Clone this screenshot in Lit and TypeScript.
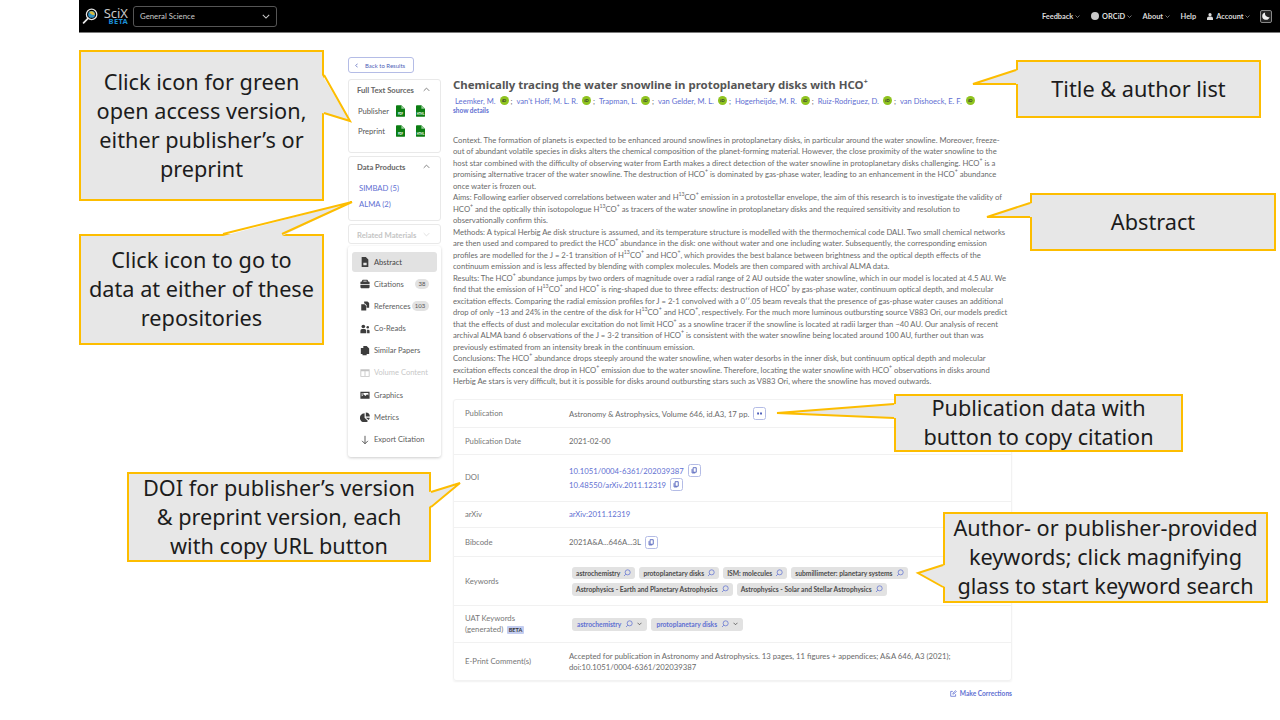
import { LitElement, html, css, svg } from "lit";
import { customElement } from "lit/decorators.js";

const sup = (t: string) => html`<sup>${t}</sup>`;
const P = sup("+");
const H13 = html`H${sup("13")}CO${P}`;
const HCO = html`HCO${P}`;

const abstract = [
  html`Context. The formation of planets is expected to be enhanced around snowlines in protoplanetary disks, in particular around the water snowline. Moreover, freeze-`,
  html`out of abundant volatile species in disks alters the chemical composition of the planet-forming material. However, the close proximity of the water snowline to the`,
  html`host star combined with the difficulty of observing water from Earth makes a direct detection of the water snowline in protoplanetary disks challenging. ${HCO} is a`,
  html`promising alternative tracer of the water snowline. The destruction of ${HCO} is dominated by gas-phase water, leading to an enhancement in the ${HCO} abundance`,
  html`once water is frozen out.`,
  html`Aims: Following earlier observed correlations between water and ${H13} emission in a protostellar envelope, the aim of this research is to investigate the validity of`,
  html`${HCO} and the optically thin isotopologue ${H13} as tracers of the water snowline in protoplanetary disks and the required sensitivity and resolution to`,
  html`observationally confirm this.`,
  html`Methods: A typical Herbig Ae disk structure is assumed, and its temperature structure is modelled with the thermochemical code DALI. Two small chemical networks`,
  html`are then used and compared to predict the ${HCO} abundance in the disk: one without water and one including water. Subsequently, the corresponding emission`,
  html`profiles are modelled for the J = 2-1 transition of ${H13} and ${HCO}, which provides the best balance between brightness and the optical depth effects of the`,
  html`continuum emission and is less affected by blending with complex molecules. Models are then compared with archival ALMA data.`,
  html`Results: The ${HCO} abundance jumps by two orders of magnitude over a radial range of 2 AU outside the water snowline, which in our model is located at 4.5 AU. We`,
  html`find that the emission of ${H13} and ${HCO} is ring-shaped due to three effects: destruction of ${HCO} by gas-phase water, continuum optical depth, and molecular`,
  html`excitation effects. Comparing the radial emission profiles for J = 2-1 convolved with a 0′′.05 beam reveals that the presence of gas-phase water causes an additional`,
  html`drop of only ~13 and 24% in the centre of the disk for ${H13} and ${HCO}, respectively. For the much more luminous outbursting source V883 Ori, our models predict`,
  html`that the effects of dust and molecular excitation do not limit ${HCO} as a snowline tracer if the snowline is located at radii larger than ~40 AU. Our analysis of recent`,
  html`archival ALMA band 6 observations of the J = 3-2 transition of ${HCO} is consistent with the water snowline being located around 100 AU, further out than was`,
  html`previously estimated from an intensity break in the continuum emission.`,
  html`Conclusions: The ${HCO} abundance drops steeply around the water snowline, when water desorbs in the inner disk, but continuum optical depth and molecular`,
  html`excitation effects conceal the drop in ${HCO} emission due to the water snowline. Therefore, locating the water snowline with ${HCO} observations in disks around`,
  html`Herbig Ae stars is very difficult, but it is possible for disks around outbursting stars such as V883 Ori, where the snowline has moved outwards.`,
];

const authors = ["Leemker, M.", "van't Hoff, M. L. R.", "Trapman, L.", "van Gelder, M. L.", "Hogerheijde, M. R.", "Ruiz-Rodriguez, D.", "van Dishoeck, E. F."];

const chevron = (up = false) => html`<svg class="chev" viewBox="0 0 10 6"><path d=${up ? "M1 5l4-4 4 4" : "M1 1l4 4 4-4"} fill="none" stroke="currentColor" stroke-width="1.3"/></svg>`;
const search = html`<svg class="mag" viewBox="0 0 12 12"><circle cx="7" cy="5" r="3.8" fill="none" stroke="#5f70d2" stroke-width="1.1"/><path d="M4.2 7.8L1.5 10.5" stroke="#5f70d2" stroke-width="1.1"/></svg>`;
const copy = html`<button class="mini"><svg viewBox="0 0 10 10"><path d="M3 1h4.5v6.5H3z" fill="none" stroke="#4a5bb8" stroke-width="1.2"/><path d="M1.5 3v5.5H6" fill="none" stroke="#4a5bb8" stroke-width="1.2"/></svg></button>`;
const quote = html`<button class="mini"><svg viewBox="0 0 10 10"><path d="M1.500 3.500h2.800v3H1.800zM5.700 3.500h2.800v3H6z" fill="#4a5bb8"/></svg></button>`;
const orcid = html`<span class="orcid">iD</span>`;
const doc = (label: string) => html`<svg class="doc" viewBox="0 0 10 13"><path d="M0 1a1 1 0 0 1 1-1h5l4 4v8a1 1 0 0 1-1 1H1a1 1 0 0 1-1-1z" fill="#0b7d12"/><path d="M6 0v4h4z" fill="#9ccf9e"/><text x="5" y="10.5" text-anchor="middle" font-size="3" font-weight="700" fill="#fff" font-family="Lato, sans-serif">${label}</text></svg>`;

const I = (d: unknown, fill = "#3d3d3d") => html`<svg class="nicon" viewBox="0 0 12 12" fill=${fill}>${d}</svg>`;
const navItems: { label: string; icon: unknown; badge?: string; off?: boolean; active?: boolean }[] = [
  { label: "Abstract", active: true, icon: I(svg`<path fill-rule="evenodd" d="M2 0h5l3 3v9H2zM4 7v3h4V7z"/>`) },
  { label: "Citations", badge: "38", icon: I(svg`<path d="M3.5 1h5a1 1 0 0 1 1 1v1h1a1 1 0 0 1 1 1v2H.5V4a1 1 0 0 1 1-1h1V2a1 1 0 0 1 1-1zM4 2.2V3h4v-.8zM.5 7h11v3a1 1 0 0 1-1 1h-9a1 1 0 0 1-1-1z"/>`) },
  { label: "References", badge: "103", icon: I(svg`<path d="M5 .5h4l2 2V8H8V5L6 3H5zM1.5 4h4L7.500 6v5.500h-6z"/>`) },
  { label: "Co-Reads", icon: I(svg`<circle cx="4" cy="3" r="2.200"/><path d="M.5 11V8a2 2 0 0 1 2-2h3a2 2 0 0 1 2 2v3z"/><circle cx="9.300" cy="4" r="1.500"/><path d="M8.500 7h1.500a1.500 1.500 0 0 1 1.500 1.500V11h-3z"/>`) },
  { label: "Similar Papers", icon: I(svg`<path d="M4 0h4l3 3v6.500H8V11H3V9.500H1V2.500h3z"/>`) },
  { label: "Volume Content", off: true, icon: I(svg`<path fill-rule="evenodd" d="M.5 1.500h11v9H.5zM1.500 4v5.500h4V4zM6.500 4v5.500h4V4z"/>`, "#c4c4c4") },
  { label: "Graphics", icon: I(svg`<path fill-rule="evenodd" d="M.5 2h11v8.500H.5zM2 3.500v4.200l2.500-2.200 2 1.800 2-2.300 1.500 1.700V3.500zM3.500 3.800a1 1 0 1 1 0 2 1 1 0 0 1 0-2z"/>`) },
  { label: "Metrics", icon: I(svg`<path d="M5.500 1.500v5.500l4 3.700A5.500 5.500 0 1 1 5.500 1.500z"/><path d="M7 .5a5 5 0 0 1 4.800 4.800H7z"/><path d="M7 7h4.700a5 5 0 0 1-1.400 2.700z"/>`) },
  { label: "Export Citation", icon: I(svg`<path d="M6 1v9.500M2.500 7L6 10.500 9.500 7" fill="none" stroke="#3d3d3d" stroke-width="1"/>`) },
];

const keywords = ["astrochemistry", "protoplanetary disks", "ISM: molecules", "submillimeter: planetary systems", "Astrophysics - Earth and Planetary Astrophysics", "Astrophysics - Solar and Stellar Astrophysics"];

/* Annotation callouts: free-placed over the page. tail = polygon in page coordinates, inset = direction into the box */
const callouts = [
  { x: 79, y: 50, w: 245, h: 151, tail: [[324, 75], [350, 121], [324, 113]], inset: [-2, 0], lines: ["Click icon for green", "open access version,", "either publisher’s or", "preprint"] },
  { x: 79, y: 234, w: 245, h: 111, tail: [[223, 234], [352, 202], [282, 234]], inset: [0, 2], lines: ["Click icon to go to", "data at either of these", "repositories"] },
  { x: 1016, y: 60, w: 245, h: 58, tail: [[1016, 70], [973, 84], [1016, 84]], inset: [2, 0], lines: ["Title & author list"] },
  { x: 1030, y: 193, w: 246, h: 58, tail: [[1030, 203], [987, 217], [1030, 217]], inset: [2, 0], lines: ["Abstract"] },
  { x: 894, y: 394, w: 289, h: 58, tail: [[894, 404], [777, 413], [894, 418]], inset: [2, 0], lines: ["Publication data with", "button to copy citation"] },
  { x: 127, y: 472, w: 304, h: 90, tail: [[431, 492], [460, 483], [431, 507]], inset: [-2, 0], lines: ["DOI for publisher’s version", "& preprint version, each", "with copy URL button"] },
  { x: 943, y: 512, w: 325, h: 91, tail: [[943, 565], [918, 573], [943, 587]], inset: [2, 0], lines: ["Author- or publisher-provided", "keywords; click magnifying", "glass to start keyword search"] },
];

@customElement("app-root")
export class AppRoot extends LitElement {
  static styles = css`
    :host { display: block; position: relative; width: 1280px; height: 720px; overflow: hidden; background: #fff; font-family: Lato, "Noto Sans", sans-serif; font-size: 8px; color: #666; }
    * { box-sizing: border-box; }
    header { margin-left: 79px; height: 33px; background: #000; border-bottom: 1px solid #7a7a7a; display: flex; align-items: center; padding: 0 8px 0 3px; color: #ddd; font-size: 7.400px; font-weight: 700; }
    .logo { display: flex; align-items: center; gap: 5px; margin-right: 5px; }
    .logo svg { width: 16px; height: 16px; flex: none; }
    .brand { display: flex; flex-direction: column; align-items: flex-end; width: 25px; }
    .brand b { font-weight: 400; font-size: 13px; color: #c8c8c8; line-height: 10px; font-family: "Noto Sans", sans-serif; }
    .brand i { font-style: normal; font-weight: 700; font-size: 7.500px; color: #1c8fd6; line-height: 7px; letter-spacing: .3px; font-family: "Noto Sans", sans-serif; }
    .select { width: 144px; height: 21px; border: 1px solid #555; border-radius: 3px; display: flex; align-items: center; justify-content: space-between; padding: 0 6px; font-weight: 400; color: #ccc; font-size: 7.800px; }
    .chev { width: 7px; height: 5px; flex: none; }
    .select .chev { width: 8px; }
    .menu { margin-left: auto; display: flex; align-items: center; gap: 11px; }
    .menu span { display: flex; align-items: center; gap: 1.500px; }
    .menu .chev { width: 5px; height: 3px; color: #aaa; }
    .moon { width: 12px; height: 13px; border: 1px solid #888; border-radius: 2px; background: #222; display: flex; align-items: center; justify-content: center; margin-left: -1px; }
    .moon svg { width: 8px; height: 8px; }

    main { display: flex; padding: 24px 0 0 348px; }
    aside { width: 93px; flex: none; display: flex; flex-direction: column; align-items: stretch; }
    .back { width: 66px; height: 16px; border: 1px solid #b4bce6; border-radius: 3px; background: #fff; display: flex; align-items: center; gap: 7px; padding: 0 6px; font-size: 6px; color: #4f5fb8; font-family: inherit; margin-bottom: 6px; white-space: nowrap; }
    .back svg { width: 3px; height: 5px; flex: none; }
    .card { border: 1px solid #e9e9e9; border-radius: 3px; background: #fff; padding: 4px 8px; }
    .card + .card { margin-top: 3px; }
    .card h4 { margin: 0; height: 11px; font-size: 7.650px; font-weight: 700; color: #666; display: flex; justify-content: space-between; align-items: center; white-space: nowrap; }
    .card h4 .chev { color: #777; margin-right: 2px; }
    .sources { height: 74px; }
    .src { display: flex; align-items: center; margin-left: 1px; height: 20px; font-size: 7.600px; color: #555; }
    .src:first-of-type { margin-top: 6px; }
    .src label { width: 38px; flex: none; }
    .doc { width: 9px; height: 12px; margin-right: 11px; flex: none; }
    .data { height: 65px; }
    .data a { display: block; color: #5f70d2; font-size: 7.700px; line-height: 15.500px; margin-left: 2px; }
    .data a:first-of-type { margin-top: 9px; }
    .related { height: 20px; padding: 4px 8px; }
    .related h4 { color: #c4c4c4; }
    .related h4 .chev { color: #ddd; }
    nav { margin-top: 2px; height: 211px; border-radius: 3px; background: #fff; box-shadow: 0 1px 3px rgba(0,0,0,.2); padding: 6px 4px 0; }
    .item { height: 20px; margin-bottom: 2.200px; border-radius: 3px; display: flex; align-items: center; padding: 0 8px; gap: 4px; font-size: 7.550px; color: #5c5c5c; white-space: nowrap; }
    .item.active { background: #e2e2e2; color: #444; }
    .item.off { color: #c8c8c8; }
    .nicon { width: 10px; height: 10px; flex: none; }
    .badge { margin-left: auto; min-width: 14px; height: 10px; border-radius: 5px; background: #e2e2e2; font-size: 6px; line-height: 10px; text-align: center; padding: 0 3px; color: #555; }
    .item .badge.wide { margin-left: -3px; padding: 0 2px; min-width: 17px; }

    article { margin-left: 12px; padding-top: 18px; width: 559px; flex: none; }
    h1 { margin: 0; padding-top: 1px; height: 20px; line-height: 18px; font-size: 11.450px; font-weight: 700; color: #555; white-space: nowrap; font-family: "Noto Sans", sans-serif; }
    h1 sup { font-size: 7px; line-height: 0; }
    .authors { display: flex; align-items: center; height: 11px; padding-left: 2px; color: #5f70d2; font-size: 7.600px; white-space: nowrap; }
    .authors .semi { color: #666; margin: 0 4px 0 2px; }
    .orcid { width: 9px; height: 9px; border-radius: 50%; background: #8fc31f; color: #333; font-size: 4.500px; font-weight: 700; line-height: 9px; text-align: center; margin-left: 4px; flex: none; }
    .show { font-size: 6.500px; font-weight: 700; color: #5f70d2; line-height: 10px; margin-bottom: 19px; }
    .abs { line-height: 11.480px; font-size: 7.700px; color: #6a6a6a; white-space: nowrap; margin-bottom: 11.500px; }
    .abs sup { font-size: 5.200px; line-height: 0; }

    .table { border: 1px solid #f2f2f2; border-radius: 3px; box-shadow: 0 1px 2px rgba(0,0,0,.06); }
    .row { display: grid; grid-template-columns: 104px 1fr; align-items: center; border-bottom: 1.500px solid #f1f1f1; padding-left: 11px; font-size: 7.730px; color: #6a6a6a; }
    .row:last-child { border-bottom: 0; }
    .row .k { color: #777; line-height: 11px; }
    .lnk { color: #5f70d2; }
    .line { display: flex; align-items: center; gap: 4px; white-space: nowrap; }
    .mini { width: 13px; height: 13px; border: 1px solid #b4bce6; border-radius: 2.500px; background: #fff; padding: 0; display: flex; align-items: center; justify-content: center; flex: none; }
    .mini svg { width: 7px; height: 7px; }
    .tags { display: flex; flex-wrap: wrap; gap: 4px; margin-left: 3px; }
    .tag { height: 12.500px; border-radius: 3px; background: #e2e2e2; display: flex; align-items: center; gap: 3px; padding: 0 4px; font-size: 6.700px; font-weight: 700; color: #4c4c4c; white-space: nowrap; }
    .tag.uat { color: #5f70d2; height: 13px; gap: 4px; padding: 0 5px; }
    .tag .chev { width: 5px; height: 3.500px; color: #333; }
    .mag { width: 8px; height: 8px; flex: none; }
    .beta { background: #c3cdf0; color: #333; font-size: 5.500px; font-weight: 700; padding: 0 1.500px; border-radius: 1px; margin-left: 2px; line-height: 8px; display: inline-block; }
    .comment { line-height: 10.500px; }
    .fix { display: flex; justify-content: flex-end; align-items: center; gap: 3px; margin-top: 8px; font-size: 6.600px; font-weight: 700; color: #5f70d2; }
    .fix svg { width: 7px; height: 7px; }

    .tails { position: absolute; left: 0; top: 0; width: 1280px; height: 720px; pointer-events: none; }
    .callout { position: absolute; padding-bottom: 2px; background: #e7e7e7; border: 2px solid #fdbd00; display: flex; flex-direction: column; justify-content: center; align-items: center; font-family: "Noto Sans", sans-serif; font-size: 21.700px; line-height: 29px; color: #1c1c1c; text-align: center; white-space: nowrap; }
  `;

  row(k: unknown, v: unknown, h: number) {
    return html`<div class="row" style="height:${h}px"><div class="k">${k}</div><div>${v}</div></div>`;
  }

  render() {
    return html`
      <header>
        <div class="logo">
          <svg viewBox="0 0 20 20">
            <circle cx="12" cy="8" r="6.500" fill="none" stroke="#e8e8e8" stroke-width="1.600"/>
            <circle cx="12" cy="8" r="4.300" fill="#2f8fc4"/>
            <path d="M9 5a4.300 4.300 0 0 1 7 3c-2 2-5 0-7-3z" fill="#d8b93a"/>
            <path d="M7.500 13L2 18.500" stroke="#e8e8e8" stroke-width="2.200" stroke-linecap="round"/>
          </svg>
          <div class="brand"><b>SciX</b><i>BETA</i></div>
        </div>
        <div class="select">General Science ${chevron()}</div>
        <div class="menu">
          <span>Feedback ${chevron()}</span>
          <span><svg width="8" height="8" viewBox="0 0 8 8"><circle cx="4" cy="4" r="4" fill="#c9c9c9"/></svg>&nbsp;ORCiD ${chevron()}</span>
          <span>About ${chevron()}</span>
          <span>Help</span>
          <span><svg width="6" height="7" viewBox="0 0 6 7"><circle cx="3" cy="1.700" r="1.600" fill="#ddd"/><path d="M0 7V5.500a2 2 0 0 1 2-2h2a2 2 0 0 1 2 2V7z" fill="#ddd"/></svg>&nbsp;Account ${chevron()}</span>
          <div class="moon"><svg viewBox="0 0 10 10"><path d="M4 .5a4.700 4.700 0 1 0 5.500 5.800A4.500 4.500 0 0 1 4 .5z" fill="#eee"/></svg></div>
        </div>
      </header>
      <main>
        <aside>
          <button class="back"><svg viewBox="0 0 4 6"><path d="M3.500.5L1 3l2.500 2.500" fill="none" stroke="#4f5fb8"/></svg>Back to Results</button>
          <div class="card sources">
            <h4>Full Text Sources ${chevron(true)}</h4>
            <div class="src"><label>Publisher</label>${doc("PDF")}${doc("HTML")}</div>
            <div class="src"><label>Preprint</label>${doc("PDF")}${doc("HTML")}</div>
          </div>
          <div class="card data">
            <h4>Data Products ${chevron(true)}</h4>
            <a>SIMBAD (5)</a>
            <a>ALMA (2)</a>
          </div>
          <div class="card related"><h4>Related Materials ${chevron()}</h4></div>
          <nav>
            ${navItems.map((n) => html`<div class="item ${n.active ? "active" : ""} ${n.off ? "off" : ""}">
              ${n.icon}<span>${n.label}</span>${n.badge ? html`<span class="badge ${n.badge === "103" ? "wide" : ""}">${n.badge}</span>` : ""}
            </div>`)}
          </nav>
        </aside>
        <article>
          <h1>Chemically tracing the water snowline in protoplanetary disks with HCO<sup>+</sup></h1>
          <div class="authors">
            ${authors.map((a, i) => html`<span>${a}</span>${orcid}${i < authors.length - 1 ? html`<span class="semi">;</span>` : ""}`)}
          </div>
          <div class="show">show details</div>
          <div class="abs">${abstract.map((l) => html`<div>${l}</div>`)}</div>
          <div class="table">
            ${this.row("Publication", html`<div class="line">Astronomy &amp; Astrophysics, Volume 646, id.A3, 17 pp. ${quote}</div>`, 28)}
            ${this.row("Publication Date", "2021-02-00", 27)}
            ${this.row("DOI", html`<div class="line lnk" style="margin-bottom:1px">10.1051/0004-6361/202039387 ${copy}</div><div class="line lnk">10.48550/arXiv.2011.12319 ${copy}</div>`, 46.500)}
            ${this.row("arXiv", html`<span class="lnk">arXiv:2011.12319</span>`, 26.500)}
            ${this.row("Bibcode", html`<div class="line">2021A&amp;A...646A...3L ${copy}</div>`, 29)}
            ${this.row("Keywords", html`<div class="tags">${keywords.map((k) => html`<div class="tag">${k} ${search}</div>`)}</div>`, 49)}
            ${this.row(html`UAT Keywords<br />(generated) <span class="beta">BETA</span>`, html`<div class="tags">${["astrochemistry", "protoplanetary disks"].map((k) => html`<div class="tag uat">${k} ${search} ${chevron()}</div>`)}</div>`, 37)}
            ${this.row("E-Print Comment(s)", html`<div class="comment">Accepted for publication in Astronomy and Astrophysics. 13 pages, 11 figures + appendices; A&amp;A 646, A3 (2021);<br />doi:10.1051/0004-6361/202039387</div>`, 37)}
          </div>
          <div class="fix"><svg viewBox="0 0 10 10"><path d="M8 6v3H1V2h3M4 6l.3-1.500L8 1l1 1-3.500 3.700z" fill="none" stroke="#5f70d2" stroke-width="1.100"/></svg>Make Corrections</div>
        </article>
      </main>
      ${callouts.map((c) => html`<div class="callout" style="left:${c.x}px;top:${c.y}px;width:${c.w}px;height:${c.h}px">${c.lines.map((l) => html`<div>${l}</div>`)}</div>`)}
      <svg class="tails" viewBox="0 0 1280 720">
        ${callouts.map((c) => {
          const [a, b, d] = c.tail;
          const [dx, dy] = c.inset;
          const fill = `${a[0] + dx},${a[1] + dy} ${b[0]},${b[1]} ${d[0] + dx},${d[1] + dy}`;
          const line = `${a[0]},${a[1]} ${b[0]},${b[1]} ${d[0]},${d[1]}`;
          return svg`<polygon points=${fill} fill="#e7e7e7"/><polyline points=${line} fill="none" stroke="#fdbd00" stroke-width="2"/>`;
        })}
      </svg>
    `;
  }
}
